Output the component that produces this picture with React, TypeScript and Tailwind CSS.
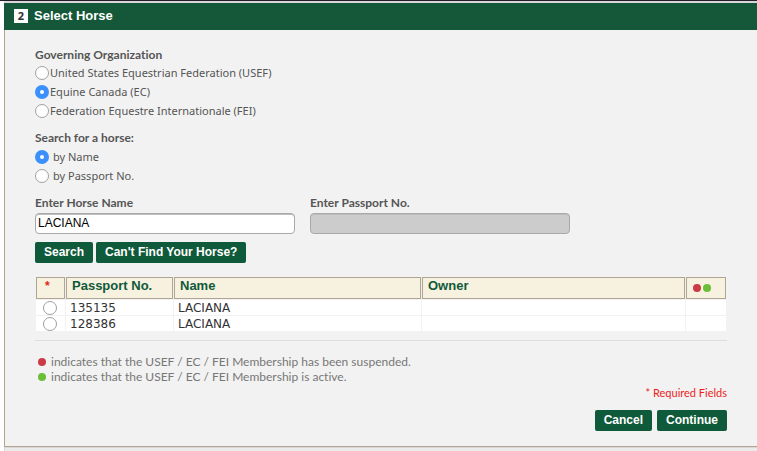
import { useState } from "react";
import type { ReactNode } from "react";

const horses = [
  { passport: "135135", name: "LACIANA", owner: "" },
  { passport: "128386", name: "LACIANA", owner: "" },
];

const organizations = [
  "United States Equestrian Federation (USEF)",
  "Equine Canada (EC)",
  "Federation Equestre Internationale (FEI)",
];

const sans = "font-['Lato','Noto_Sans',sans-serif] [font-variant-ligatures:none]";
const noto = "font-['Noto_Sans',sans-serif]";
const arial = "font-['Liberation_Sans',Arial,sans-serif]";

const radioClass =
  "block h-[14px] w-[14px] shrink-0 appearance-none rounded-full border border-[#a0a0a0] bg-white checked:border-[5px] checked:border-[#3b90fc]";

function Dot({ color }: { color: "red" | "green" }) {
  return (
    <span
      className={`inline-block h-2 w-2 shrink-0 rounded-full ${color === "red" ? "bg-[#cb3b45]" : "bg-[#6abf36]"}`}
    />
  );
}

function ActionButton({ children }: { children: ReactNode }) {
  return (
    <button
      type="button"
      className={`h-[21px] rounded-[2px] bg-[#0f5a3a] px-[9px] pb-px text-[12px] leading-[20px] font-bold text-white ${arial}`}
    >
      {children}
    </button>
  );
}

function Field({ id, label, ...rest }: { id: string; label: string; defaultValue?: string; disabled?: boolean }) {
  return (
    <div className="w-[260px]">
      <label htmlFor={id} className="block text-[12px] leading-4 font-bold text-[#555]">
        {label}
      </label>
      <input
        id={id}
        type="text"
        {...rest}
        className={`mt-[2px] block h-[21px] w-full rounded-[4px] border border-[#a9a9a9] bg-white px-[2px] pb-[2px] text-[12px] text-black shadow-[inset_0_1px_0_#bdbdbd] disabled:bg-[#ccc] ${arial}`}
      />
    </div>
  );
}

export default function App() {
  const [org, setOrg] = useState(1);
  const [mode, setMode] = useState(0);
  const th = `h-[22px] border border-[#b0a492] bg-[#f7f1df] px-[5px] pb-1 text-left text-[13px] leading-4 font-bold text-[#0f5a3a] ${arial}`;
  const td = "h-[15px] bg-white px-1 pt-px pb-0 text-[12px] leading-[14px] text-[#333]";

  return (
    <div className={`bg-white pl-1 text-[12px] text-[#555] ${sans}`}>
      <div className="-ml-1 h-px bg-[#241f25]" />
      <div className="h-[2px] bg-[#d8d5dc]" />
      <header className="flex h-[27px] items-center gap-[6px] bg-[#145839] pb-[2px] pl-[10px]">
        <span
          className={`flex h-[14px] w-[14px] items-center justify-center bg-white text-[11px] leading-[14px] font-bold text-[#333] ${noto}`}
        >
          2
        </span>
        <h1 className={`text-[13px] leading-4 font-bold text-white ${arial}`}>Select Horse</h1>
      </header>

      <main className="border-b border-l border-[#b5a48f] bg-[#f2f2f2] pt-4 pr-[30px] pb-[15px] pl-[30px]">
        <fieldset>
          <legend className="block text-[12px] leading-[17px] font-bold">Governing Organization</legend>
          {organizations.map((name, i) => (
            <label key={name} className={`flex h-[19px] items-center gap-px text-[11px] leading-[19px] ${noto}`}>
              <input type="radio" name="org" checked={org === i} onChange={() => setOrg(i)} className={radioClass} />
              {name}
            </label>
          ))}
        </fieldset>

        <fieldset className="mt-2">
          <legend className="block text-[12px] leading-[19px] font-bold">Search for a horse:</legend>
          {["by Name", "by Passport No."].map((name, i) => (
            <label key={name} className={`flex h-[19px] items-center gap-1 text-[11px] leading-[19px] ${noto}`}>
              <input type="radio" name="mode" checked={mode === i} onChange={() => setMode(i)} className={radioClass} />
              {name}
            </label>
          ))}
        </fieldset>

        <div className="mt-[10px] flex gap-[15px]">
          <Field id="horse-name" label="Enter Horse Name" defaultValue="LACIANA" />
          <Field id="passport-no" label="Enter Passport No." disabled />
        </div>

        <div className="mt-2 flex gap-[3px]">
          <ActionButton>Search</ActionButton>
          <ActionButton>Can't Find Your Horse?</ActionButton>
        </div>

        <table className="mt-[13px] w-full table-fixed border-separate border-spacing-px font-['DejaVu_Sans',Verdana,sans-serif]">
          <colgroup>
            <col className="w-[29px]" />
            <col className="w-[107px]" />
            <col className="w-[247px]" />
            <col />
            <col className="w-[40px]" />
          </colgroup>
          <thead>
            <tr>
              <th className={th}>
                <span className="block pl-[3px] text-[12px] text-[#e0261c]">*</span>
              </th>
              <th className={th}>Passport No.</th>
              <th className={th}>Name</th>
              <th className={th}>Owner</th>
              <th className={th}>
                <span className="flex gap-[2px] pt-1 pl-px">
                  <Dot color="red" />
                  <Dot color="green" />
                </span>
              </th>
            </tr>
          </thead>
          <tbody>
            {horses.map((horse) => (
              <tr key={horse.passport}>
                <td className={td}>
                  <span className="flex h-[14px] items-center pl-[3px]">
                    <input type="radio" name="horse" aria-label={`Passport ${horse.passport}`} className={radioClass} />
                  </span>
                </td>
                <td className={td}>{horse.passport}</td>
                <td className={td}>{horse.name}</td>
                <td className={td}>{horse.owner}</td>
                <td className={td} />
              </tr>
            ))}
          </tbody>
        </table>

        <hr className="mt-2 border-[#ddd]" />

        <div className="mt-[13px] pl-[3px] text-[12px] leading-[15px] text-[#777]">
          <p className="flex items-center gap-[5px]">
            <Dot color="red" />
            indicates that the USEF / EC / FEI Membership has been suspended.
          </p>
          <p className="flex items-center gap-[5px]">
            <Dot color="green" />
            indicates that the USEF / EC / FEI Membership is active.
          </p>
        </div>
        <p className="text-right text-[11px] leading-[17px] text-[#ee1c1c]">* Required Fields</p>

        <div className="mt-[9px] flex justify-end gap-[5px]">
          <ActionButton>Cancel</ActionButton>
          <ActionButton>Continue</ActionButton>
        </div>
      </main>
      <div className="h-1 border-t border-l border-[#d8d8d8] bg-[#ebebeb]" />
    </div>
  );
}
